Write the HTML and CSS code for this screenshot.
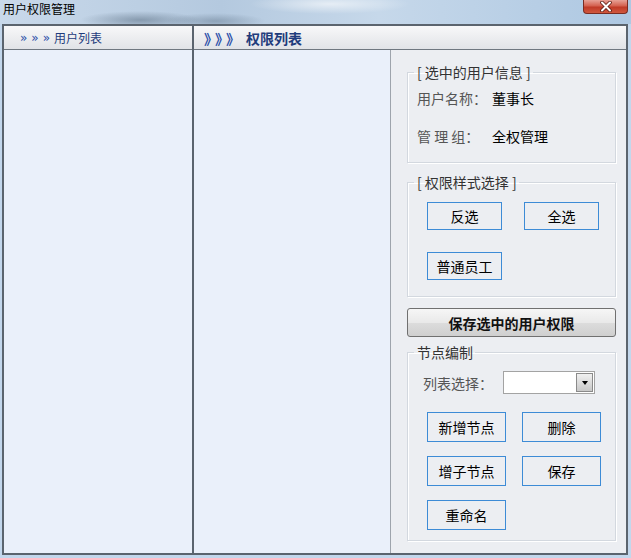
FILE: index.html
```html
<!DOCTYPE html>
<html lang="zh-CN">
<head>
  <meta charset="UTF-8" />
  <title>用户权限管理</title>
  <link rel="stylesheet" href="styles.css">
</head>
<body>

  <div class="window">
    <div class="titlebar">
      <span class="title">用户权限管理</span>
      <div class="close">
        <svg width="16" height="11" viewBox="0 0 16 11">
          <path d="M4 1.5 L12 9.5 M12 1.5 L4 9.5" stroke="#5a1c14" stroke-width="3.6" stroke-linecap="round"/>
          <path d="M4 1.5 L12 9.5 M12 1.5 L4 9.5" stroke="#fff" stroke-width="2" stroke-linecap="round"/>
        </svg>
      </div>
    </div>

    <div class="frame">
      <div class="panel">

        <!-- 用户列表 -->
        <div class="col-left">
          <div class="head head-small"><span class="arrows">»»»</span>用户列表</div>
          <div class="pane-blue"></div>
        </div>

        <!-- 权限列表 -->
        <div class="col-main">
          <div class="head head-big"><span class="arrows-big">》》》</span>权限列表</div>
          <div class="main-body">
            <div class="tree pane-blue"></div>

            <div class="side">
              <fieldset class="group group-info">
                <legend>[ 选中的用户信息 ]</legend>
                <div class="info-row"><span class="lbl">用户名称：</span><span class="val">董事长</span></div>
                <div class="info-row"><span class="lbl">管 理 组：</span><span class="val">全权管理</span></div>
              </fieldset>

              <fieldset class="group group-style">
                <legend>[ 权限样式选择 ]</legend>
                <div class="btn-grid small">
                  <button class="btn">反选</button>
                  <button class="btn">全选</button>
                  <button class="btn">普通员工</button>
                </div>
              </fieldset>

              <button class="save-btn">保存选中的用户权限</button>

              <fieldset class="group group-node">
                <legend>节点编制</legend>
                <div class="combo-row">
                  <span class="combo-lbl">列表选择：</span>
                  <div class="combo"><span class="combo-arrow"></span></div>
                </div>
                <div class="btn-grid large">
                  <button class="btn">新增节点</button>
                  <button class="btn">删除</button>
                  <button class="btn">增子节点</button>
                  <button class="btn">保存</button>
                  <button class="btn">重命名</button>
                </div>
              </fieldset>
            </div>
          </div>
        </div>

      </div>
    </div>
  </div>

</body>
</html>
```

FILE: styles.css
```css
body {
  margin: 0;
  font-family: "Noto Sans CJK SC", "Noto Sans", sans-serif;
  font-size: 14px;
  color: #000;
}

.window {
  width: 631px;
  height: 558px;
  background-color: #c3d7ec;
  display: flex;
  flex-direction: column;
}

.titlebar {
  height: 24px;
  display: flex;
  justify-content: space-between;
  align-items: flex-start;
  padding-right: 3px;
  background:
    radial-gradient(ellipse 60px 9px at 140px 20px, rgba(70,90,110,0.45), transparent),
    radial-gradient(ellipse 50px 8px at 215px 21px, rgba(70,90,110,0.35), transparent),
    radial-gradient(ellipse 80px 10px at 330px 4px, rgba(255,255,255,0.6), transparent),
    linear-gradient(90deg, #c9d9ea 0%, #b4c9df 35%, #c6d8ea 60%, #aec8e2 100%);
}

.title {
  font-size: 12px;
  line-height: 18px;
  padding-left: 3px;
}

.close {
  width: 43px;
  height: 13px;
  border: 1px solid #7a2c22;
  border-top: none;
  border-radius: 0 0 4px 4px;
  background: linear-gradient(#e7a196 0%, #d4614f 45%, #c03a27 55%, #d0583e 100%);
  display: flex;
  justify-content: center;
  align-items: center;
}

.frame {
  flex: 1;
  padding: 0 3px 3px 2px;
  display: flex;
}

.panel {
  flex: 1;
  border: 2px solid #5b646e;
  display: flex;
}

.col-left {
  width: 188px;
  border-right: 2px solid #5b646e;
  display: flex;
  flex-direction: column;
}

.col-main {
  flex: 1;
  display: flex;
  flex-direction: column;
}

.head {
  height: 23px;
  border-bottom: 1px solid #6f7780;
  background: linear-gradient(#f8f8f9, #e1e3e7);
  color: #1f3c7c;
  display: flex;
  align-items: center;
}

.head-small {
  font-size: 12px;
  padding-left: 16px;
}

.arrows {
  font-family: "DejaVu Sans", sans-serif;
  font-size: 12px;
  letter-spacing: 4px;
  color: #2a4fa8;
  margin-right: 0;
}

.head-big {
  font-size: 14px;
  font-weight: bold;
  padding-left: 10px;
}

.arrows-big {
  color: #2a4fa8;
  letter-spacing: 4px;
  margin-right: 2px;
}

.pane-blue {
  flex: 1;
  background-color: #eaf0fa;
}

.main-body {
  flex: 1;
  display: flex;
}

.tree {
  width: 196px;
  border-right: 1px solid #9ea4ac;
}

.side {
  flex: 1;
  background-color: #eceef2;
  padding: 14px 10px 0 16px;
}

.group {
  margin: 0;
  padding: 0;
  border: 1px solid #d3d8df;
  box-shadow: inset 1px 1px 0 #fff, 1px 1px 0 #fff;
  min-width: 0;
}

.group legend {
  margin-left: 6px;
  padding: 0 2px 0 3px;
  line-height: 16px;
  color: #333;
}

.group-info {
  padding: 8px 0 16px 0;
}

.info-row {
  line-height: 20px;
  display: flex;
  padding-left: 9px;
}

.info-row + .info-row {
  margin-top: 18px;
}

.lbl {
  width: 75px;
  color: #555;
}

.group-style {
  margin-top: 11px;
  padding: 12px 0 16px 0;
}

.btn-grid {
  display: grid;
  margin-left: 19px;
}

.btn-grid.small {
  grid-template-columns: 75px 75px;
  grid-auto-rows: 28px;
  column-gap: 22px;
  row-gap: 22px;
}

.btn-grid.large {
  grid-template-columns: 79px 79px;
  grid-auto-rows: 30px;
  column-gap: 16px;
  row-gap: 14px;
  margin-top: 18px;
}

.btn {
  font-family: inherit;
  font-size: 14px;
  color: #000;
  padding: 0;
  background-color: #eceef2;
  border: 1px solid #3d8bd6;
  border-radius: 0;
}

.save-btn {
  display: block;
  width: 209px;
  height: 29px;
  margin-top: 11px;
  padding: 0;
  font-family: inherit;
  font-size: 14px;
  font-weight: bold;
  color: #111;
  border: 1px solid #707070;
  border-radius: 3px;
  background: linear-gradient(#f6f6f6 0%, #e9e9e9 50%, #dcdcdc 52%, #cfcfcf 100%);
}

.group-node {
  margin-top: 7px;
  padding: 11px 0 10px 0;
}

.combo-row {
  display: flex;
  align-items: center;
  margin-left: 15px;
}

.combo-lbl {
  width: 80px;
  color: #555;
}

.combo {
  width: 89px;
  height: 21px;
  border: 1px solid #a3a3a3;
  background-color: #fff;
  display: flex;
  justify-content: flex-end;
  align-items: center;
  padding-right: 1px;
}

.combo-arrow {
  width: 15px;
  height: 17px;
  border: 1px solid #8a8a8a;
  background: linear-gradient(#f0f0f0, #c8c8c8);
  display: flex;
  justify-content: center;
  align-items: center;
}

.combo-arrow::after {
  content: "";
  border-left: 3px solid transparent;
  border-right: 3px solid transparent;
  border-top: 4px solid #000;
}
```
